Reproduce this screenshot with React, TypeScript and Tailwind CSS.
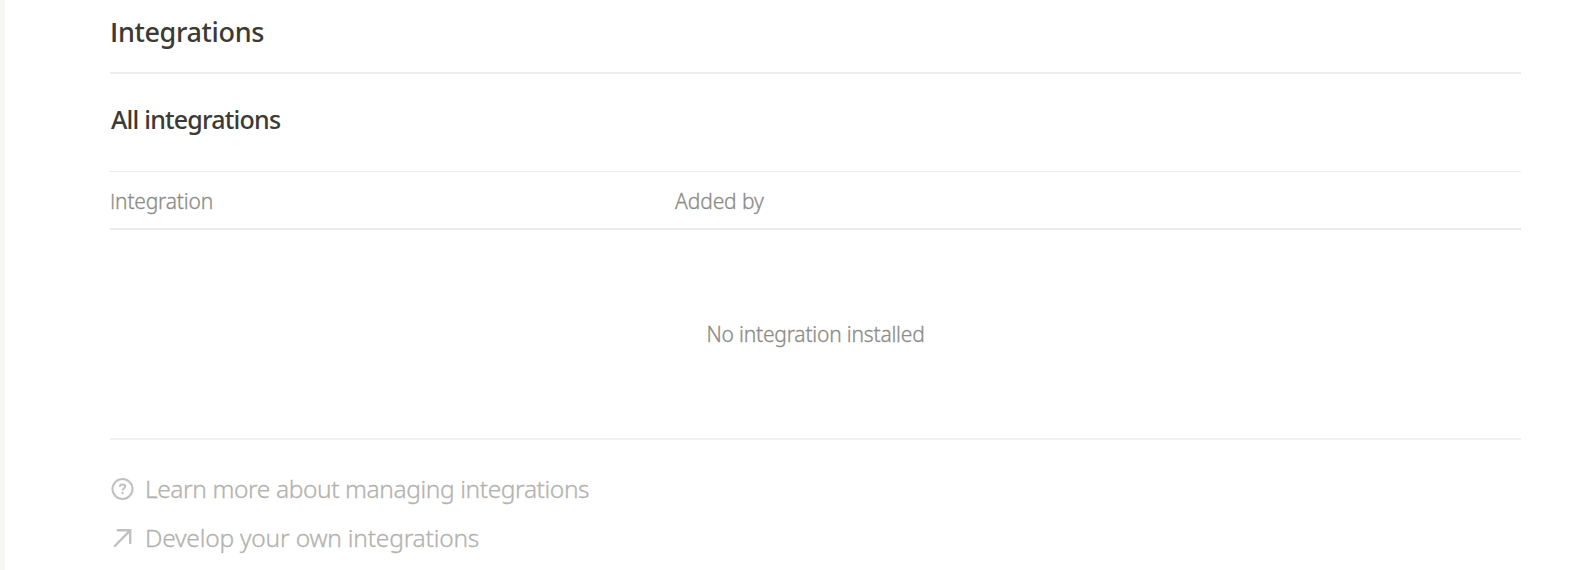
function HelpIcon() {
  return (
    <svg className="mb-0.5 size-6 shrink-0" viewBox="0 0 24 24" fill="none" stroke="#c1c0be" strokeWidth="2">
      <circle cx="12.5" cy="12" r="10" />
      <path d="M9.8 9.8c0-1.5 1-2.3 2.7-2.3s2.7.9 2.7 2.1c0 1.9-2.6 1.8-2.6 3.8" />
      <circle cx="12.5" cy="16" r="1.2" fill="#c1c0be" stroke="none" />
    </svg>
  );
}

function ArrowIcon() {
  return (
    <svg className="mb-0.5 size-6 shrink-0" viewBox="0 0 24 24" fill="none" stroke="#c1c0be" strokeWidth="2.4" strokeLinecap="round" strokeLinejoin="miter">
      <path d="M7.8 4.3H20.2V17M19.7 4.8L4.8 20" />
    </svg>
  );
}

export default function App() {
  return (
    <div className="flex h-[570px] w-full overflow-hidden bg-white font-['Noto_Sans','Open_Sans',sans-serif] text-[#3b3a34]">
      <aside className="w-[5px] shrink-0 bg-[#f7f6f3]" />
      <main className="flex min-w-0 flex-1 flex-col pr-[63px] pl-[105px]">
        <h1 className="h-[74px] border-b-2 border-[#ededec] pt-3 text-[27px] leading-10 font-medium tracking-[-0.35px] whitespace-nowrap first-letter:font-['Open_Sans'] first-letter:font-semibold">Integrations</h1>
        <h2 className="h-[97px] pt-[25px] pl-px text-[25px] leading-10 font-medium tracking-[-0.8px] whitespace-nowrap">All integrations</h2>
        <div className="grid h-[59px] grid-cols-[564px_1fr] border-t border-b-2 border-[#ebebea] pt-[13px] text-[21px] leading-8 font-light tracking-[-0.2px] text-[#8c8b87] [-webkit-text-stroke:0.3px]">
          <span className="first-letter:font-['Open_Sans']">Integration</span>
          <span className="pl-px tracking-[-0.1px]">Added by</span>
        </div>
        <div className="h-[210px] border-b-2 border-[#f1f1f0] pt-[88px] text-center text-[21px] leading-8 font-light tracking-[-0.2px] text-[#8c8b87] [-webkit-text-stroke:0.3px]">No integration installed</div>
        <nav className="flex flex-col pt-[25px] text-[24.5px] font-light whitespace-nowrap text-[#b3b2af] [-webkit-text-stroke:0.3px]">
          <a className="flex h-[49px] items-center gap-[11px] tracking-[-0.4px]"><HelpIcon />Learn more about managing integrations</a>
          <a className="flex h-[49px] items-center gap-[11px] tracking-[-0.2px]"><ArrowIcon />Develop your own integrations</a>
        </nav>
      </main>
    </div>
  );
}
